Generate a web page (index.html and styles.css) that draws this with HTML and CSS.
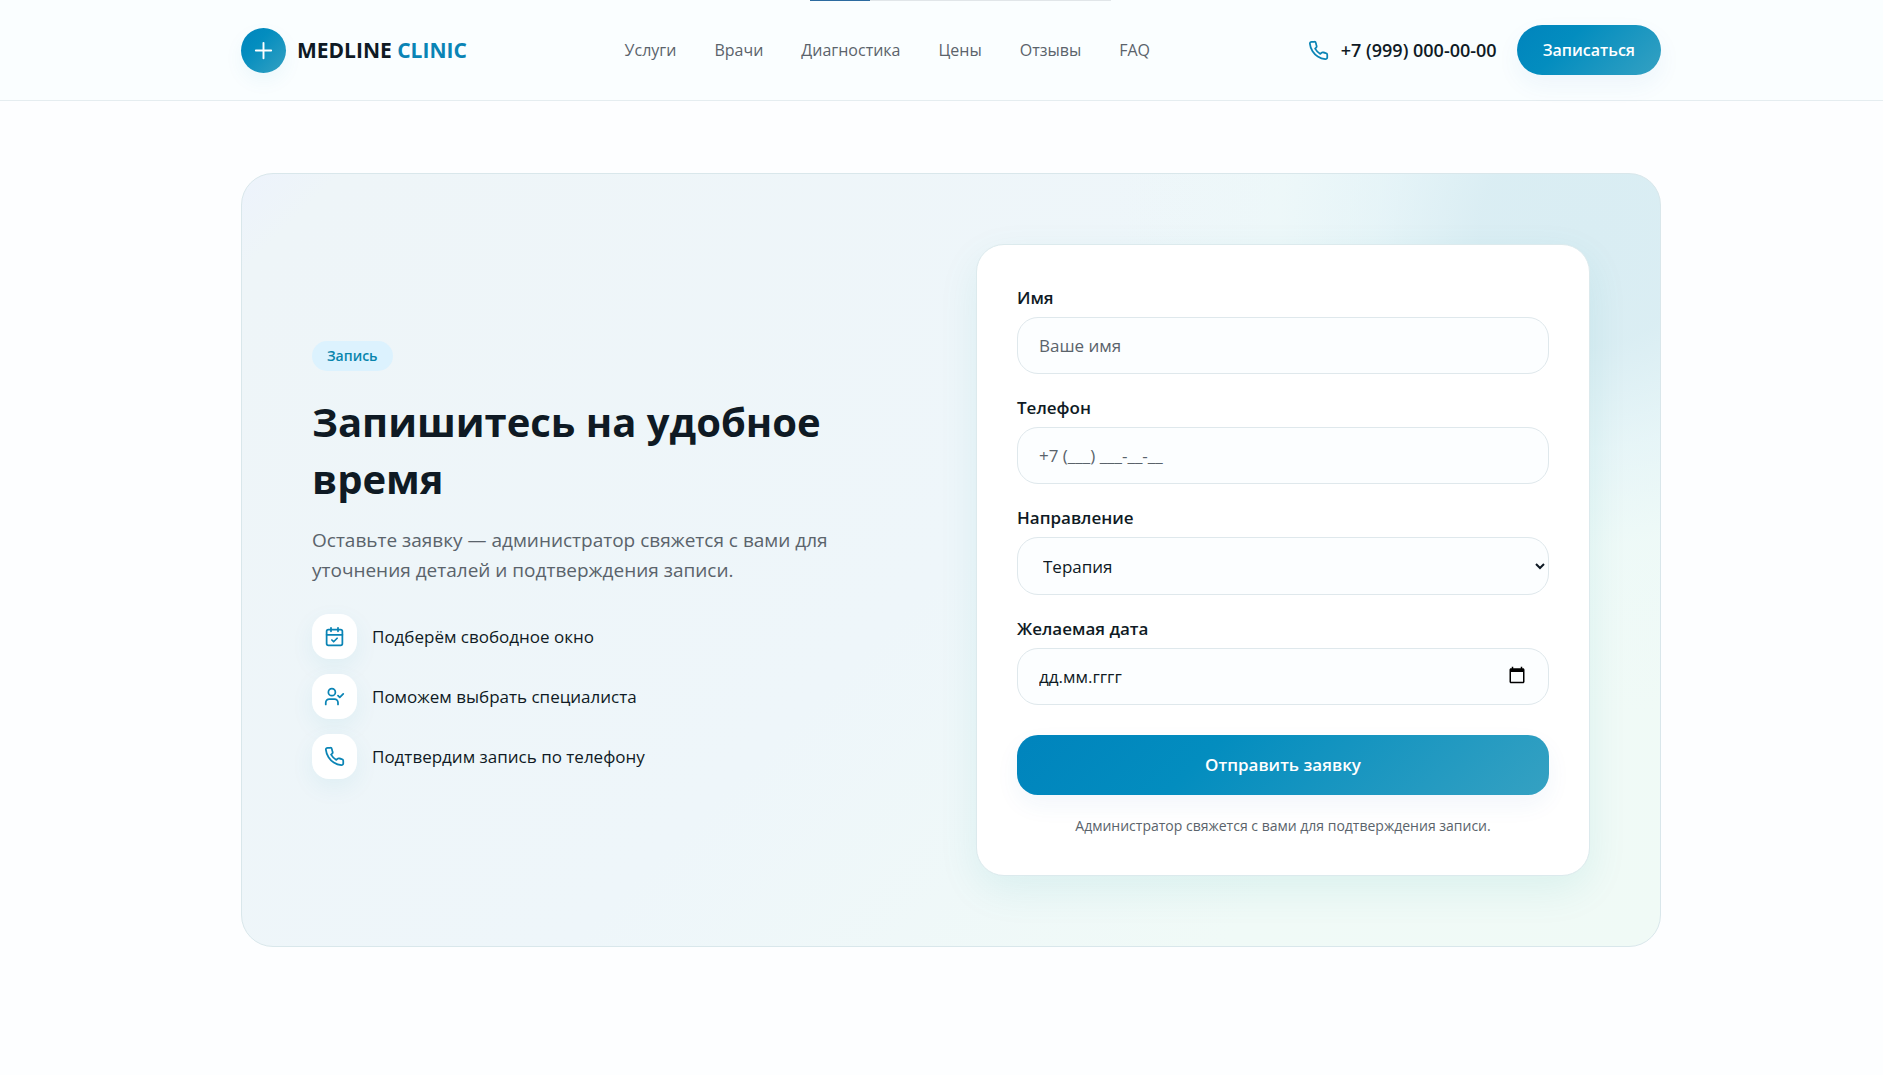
FILE: index.html
```html
<!DOCTYPE html>
<html lang="ru">
<head>
  <meta charset="utf-8">
  <meta name="viewport" content="width=device-width, initial-scale=1">
  <title>Medline Clinic</title>
  <link rel="stylesheet" href="styles.css">
</head>
<body>
  <svg class="sprite" aria-hidden="true">
    <symbol id="phone" viewBox="0 0 24 24">
      <path d="M22 16.92v3a2 2 0 0 1-2.18 2 19.79 19.79 0 0 1-8.63-3.07 19.5 19.5 0 0 1-6-6 19.79 19.79 0 0 1-3.07-8.67A2 2 0 0 1 4.11 2h3a2 2 0 0 1 2 1.72c.13.96.36 1.9.7 2.81a2 2 0 0 1-.45 2.11L8.09 9.91a16 16 0 0 0 6 6l1.27-1.27a2 2 0 0 1 2.11-.45c.91.34 1.85.57 2.81.7A2 2 0 0 1 22 16.92z"/>
    </symbol>
    <symbol id="calendar-check" viewBox="0 0 24 24">
      <path d="M8 2v4M16 2v4M3 10h18M9 16l2 2 4-4"/>
      <rect x="3" y="4" width="18" height="18" rx="2"/>
    </symbol>
    <symbol id="user-check" viewBox="0 0 24 24">
      <path d="M2 21v-2a4 4 0 0 1 4-4h6a4 4 0 0 1 4 4v2M16 11l2 2 4-4"/>
      <circle cx="9" cy="7" r="4"/>
    </symbol>
  </svg>

  <div class="progress"><span class="progress-fill"></span></div>

  <header class="header">
    <div class="container header-row">
      <a class="logo" href="#">
        <span class="logo-mark">
          <svg class="icon icon-plus" viewBox="0 0 24 24"><path d="M4 12h16M12 4v16"/></svg>
        </span>
        <span class="logo-text">MEDLINE <span class="logo-accent">CLINIC</span></span>
      </a>
      <nav class="nav">
        <a href="#services">Услуги</a>
        <a href="#doctors">Врачи</a>
        <a href="#diagnostics">Диагностика</a>
        <a href="#prices">Цены</a>
        <a href="#reviews">Отзывы</a>
        <a href="#faq">FAQ</a>
      </nav>
      <div class="header-actions">
        <a class="tel" href="tel:+79990000000">
          <svg class="icon icon-phone"><use href="#phone"/></svg>
          <span>+7 (999) 000-00-00</span>
        </a>
        <button class="button button-small" type="button">Записаться</button>
      </div>
    </div>
  </header>

  <main class="main">
    <section class="container panel">
      <div class="intro">
        <span class="badge">Запись</span>
        <h1 class="title">Запишитесь на удобное время</h1>
        <p class="lead">Оставьте заявку — администратор свяжется с вами для уточнения деталей и подтверждения записи.</p>
        <ul class="steps">
          <li class="step"><span class="step-icon"><svg class="icon"><use href="#calendar-check"/></svg></span>Подберём свободное окно</li>
          <li class="step"><span class="step-icon"><svg class="icon"><use href="#user-check"/></svg></span>Поможем выбрать специалиста</li>
          <li class="step"><span class="step-icon"><svg class="icon"><use href="#phone"/></svg></span>Подтвердим запись по телефону</li>
        </ul>
      </div>

      <form class="card">
        <div class="field">
          <label for="name">Имя</label>
          <input class="control" id="name" type="text" placeholder="Ваше имя">
        </div>
        <div class="field">
          <label for="phone-number">Телефон</label>
          <input class="control" id="phone-number" type="tel" placeholder="+7 (___) ___-__-__">
        </div>
        <div class="field">
          <label for="direction">Направление</label>
          <select class="control control-select" id="direction">
            <option>Терапия</option>
          </select>
        </div>
        <div class="field">
          <label for="date">Желаемая дата</label>
          <div class="date">
            <input class="control control-date" id="date" type="text" inputmode="numeric" placeholder="дд.мм.гггг">
            <button class="date-button" type="button" aria-label="Открыть календарь">
              <svg viewBox="0 0 24 24" width="18" height="18"><path d="M20 3h-1V1h-2v2H7V1H5v2H4c-1.100 0-2 .9-2 2v16c0 1.100.9 2 2 2h16c1.100 0 2-.9 2-2V5c0-1.100-.9-2-2-2zm0 18H4V8h16v13z"/></svg>
            </button>
          </div>
        </div>
        <button class="button button-wide" type="submit">Отправить заявку</button>
        <p class="note">Администратор свяжется с вами для подтверждения записи.</p>
      </form>
    </section>
  </main>
</body>
</html>
```
FILE: styles.css
```css
:root {
  --ink: #0f1a24;
  --muted: #5a636b;
  --brand: #0a84b5;
  --line: #dfe8ec;
  --gradient: linear-gradient(135deg, #0084bd 0%, #038dbf 35%, #35a1c2 100%);
}

* { box-sizing: border-box; }

body {
  margin: 0;
  min-height: 100vh;
  background: #fdfeff;
  color: var(--ink);
  font: 400 17px/26px "Open Sans", "Noto Sans", sans-serif;
}

h1, p, ul { margin: 0; padding: 0; }
a { color: inherit; text-decoration: none; }
button, input, select { font: inherit; color: inherit; }

.sprite { display: none; }

.icon {
  width: 21px;
  height: 21px;
  fill: none;
  stroke: var(--brand);
  stroke-width: 2;
  stroke-linecap: round;
  stroke-linejoin: round;
}

.container {
  width: 100%;
  max-width: 1420px;
  margin: 0 auto;
}

.progress {
  position: absolute;
  top: 0;
  left: 43%;
  width: 16%;
  height: 1px;
  background: #e1e6e9;
}

.progress-fill {
  display: block;
  width: 20%;
  height: 1px;
  background: #2c6ba0;
}

.header {
  padding-left: 19px;
  background: #fafeff;
  border-bottom: 1px solid #e5edf0;
}

.header-row {
  display: flex;
  align-items: center;
  justify-content: space-between;
  height: 100px;
}

.logo {
  display: flex;
  align-items: center;
  gap: 11px;
  font-size: 21px;
  font-weight: 700;
}

.logo-mark {
  display: grid;
  place-items: center;
  width: 45px;
  height: 45px;
  border-radius: 50%;
  background: var(--gradient);
  box-shadow: 0 8px 20px rgba(0, 132, 189, 0.06);
}

.logo-accent { color: var(--brand); }

.icon-plus {
  width: 23px;
  height: 23px;
  stroke: #fff;
}

.nav {
  display: flex;
  gap: 38px;
  color: var(--muted);
  font-size: 16px;
}

.header-actions {
  display: flex;
  align-items: center;
  gap: 20px;
}

.tel {
  display: flex;
  align-items: center;
  gap: 12px;
  font-size: 18px;
  font-weight: 600;
}

.button {
  border: 0;
  background: var(--gradient);
  color: #fff;
  font-weight: 600;
  box-shadow: 0 10px 24px rgba(40, 110, 190, 0.06);
}

.button-small {
  height: 50px;
  padding: 0 26px;
  border-radius: 25px;
  font-size: 16px;
}

.main { padding: 72px 0 72px 19px; }

.panel {
  display: grid;
  grid-template-columns: 1fr 1fr;
  align-items: center;
  gap: 50px;
  padding: 70px;
  border: 1px solid #d9e7eb;
  border-radius: 32px;
  background:
    radial-gradient(circle at 95% 8%, #d9edf3 0, rgba(217, 237, 243, 0.95) 110px, rgba(226, 243, 247, 0.7) 210px, rgba(236, 249, 248, 0.5) 310px, rgba(236, 249, 248, 0) 480px),
    linear-gradient(135deg, #edf3fc 0, #eef5f8 70px, #eef6fa 50%, #f0faf7 80%, #f0faf6 100%);
}

.badge {
  display: inline-block;
  padding: 0 15px;
  border-radius: 15px;
  background: #dcf2fe;
  color: #0985ad;
  font-size: 14px;
  font-weight: 600;
  line-height: 30px;
}

.title {
  margin-top: 22px;
  font-size: 40px;
  font-weight: 700;
  line-height: 57px;
}

.lead {
  margin-top: 18px;
  color: var(--muted);
  font-size: 19px;
  line-height: 30px;
}

.steps {
  display: grid;
  gap: 15px;
  margin-top: 29px;
  list-style: none;
}

.step {
  display: flex;
  align-items: center;
  gap: 15px;
}

.step-icon {
  display: grid;
  place-items: center;
  width: 45px;
  height: 45px;
  border-radius: 17px;
  background: #fff;
  box-shadow: 0 8px 24px rgba(0, 140, 170, 0.07);
}

.card {
  display: grid;
  gap: 21px;
  padding: 40px;
  border: 1px solid #dceaed;
  border-radius: 28px;
  background: #fff;
  box-shadow: 0 14px 40px rgba(0, 150, 160, 0.09);
}

.field {
  display: grid;
  gap: 6px;
}

.field label {
  font-weight: 600;
}

.control {
  width: 100%;
  height: 57px;
  padding: 0 21px;
  border: 1px solid var(--line);
  border-radius: 21px;
  background: #fcfeff;
  outline: 0;
}

.control::placeholder {
  color: var(--muted);
  opacity: 1;
}

.control-select { height: 58px; }

.control-date::placeholder { color: var(--ink); }

.date { position: relative; }

.date-button {
  position: absolute;
  top: 0;
  right: 23px;
  display: grid;
  place-items: center;
  height: 54px;
  padding: 0;
  border: 0;
  background: none;
}

.button-wide {
  height: 60px;
  margin-top: 9px;
  border-radius: 21px;
}

.note {
  color: var(--muted);
  font-size: 14px;
  line-height: 19px;
  text-align: center;
}
```
